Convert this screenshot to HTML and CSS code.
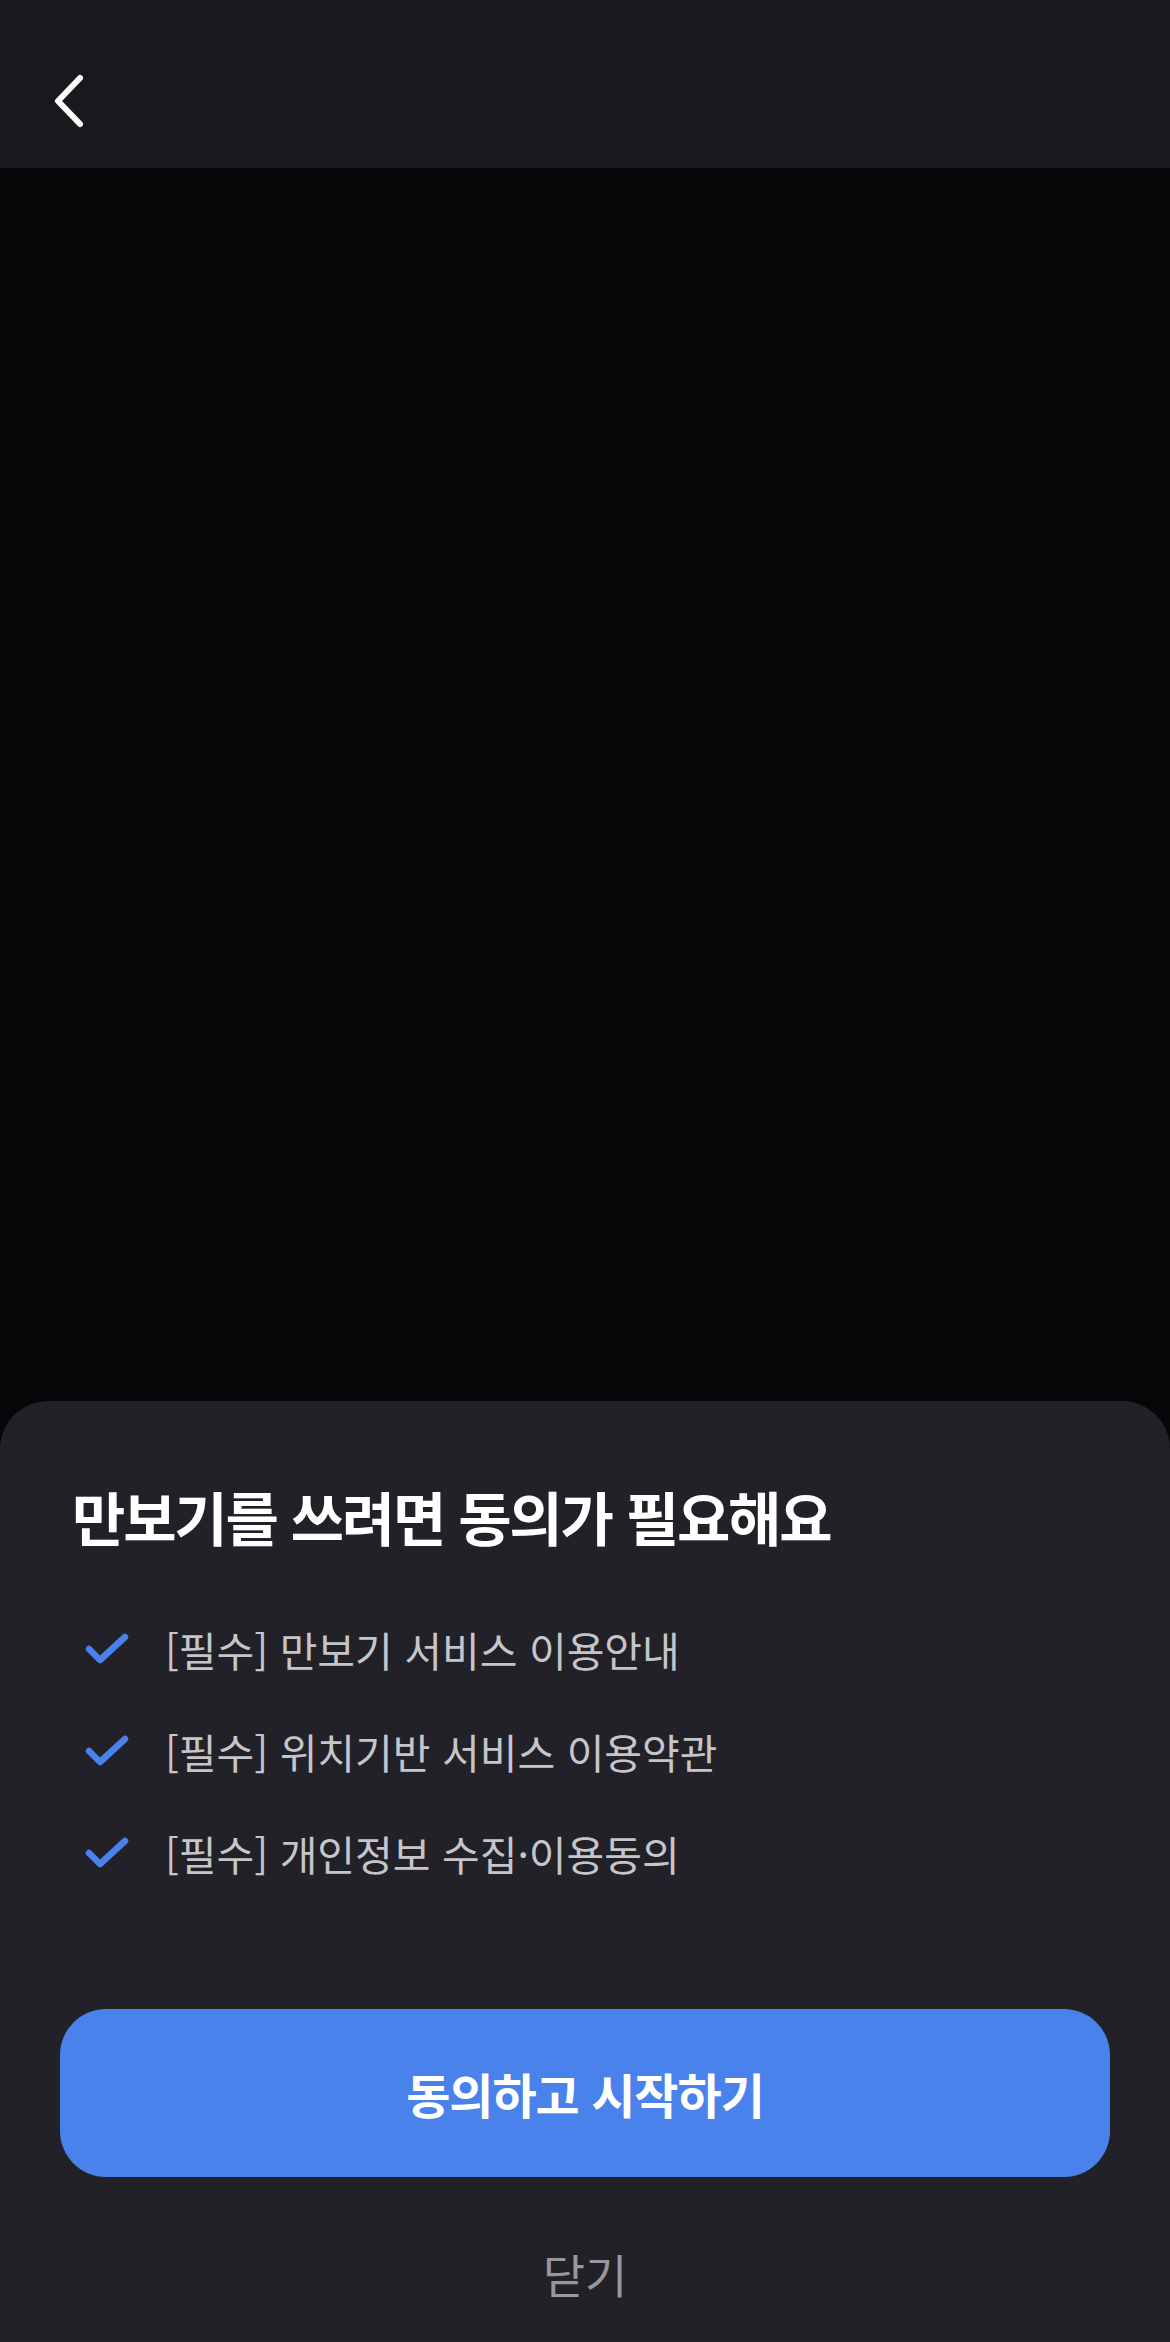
FILE: index.html
```html
<!DOCTYPE html>
<html lang="ko">
<head>
<meta charset="utf-8">
<link rel="stylesheet" href="styles.css">
</head>
<body>
<div class="page">
  <header class="topbar">
    <svg class="back" width="40" height="60" viewBox="0 0 40 60">
      <path d="M30 8 L8 31 L30 54" fill="none" stroke="#ffffff" stroke-width="6" stroke-linecap="round" stroke-linejoin="round"/>
    </svg>
  </header>
  <main class="content"></main>
  <section class="sheet">
    <h1 class="title">만보기를 쓰려면 동의가 필요해요</h1>
    <ul class="terms">
      <li class="term">
        <svg class="check" width="46" height="34" viewBox="0 0 46 34"><path d="M5 17 L16 28 L41 5" fill="none" stroke="#4a82ec" stroke-width="6.5" stroke-linecap="round" stroke-linejoin="round"/></svg>
        <span>[필수] 만보기 서비스 이용안내</span>
      </li>
      <li class="term">
        <svg class="check" width="46" height="34" viewBox="0 0 46 34"><path d="M5 17 L16 28 L41 5" fill="none" stroke="#4a82ec" stroke-width="6.5" stroke-linecap="round" stroke-linejoin="round"/></svg>
        <span>[필수] 위치기반 서비스 이용약관</span>
      </li>
      <li class="term">
        <svg class="check" width="46" height="34" viewBox="0 0 46 34"><path d="M5 17 L16 28 L41 5" fill="none" stroke="#4a82ec" stroke-width="6.5" stroke-linecap="round" stroke-linejoin="round"/></svg>
        <span>[필수] 개인정보 수집·이용동의</span>
      </li>
    </ul>
    <button class="agree">동의하고 시작하기</button>
    <button class="close">닫기</button>
  </section>
</div>
</body>
</html>
```

FILE: styles.css
```css
* { box-sizing: border-box; }
html, body {
  margin: 0;
  padding: 0;
  background: #060608;
}
body {
  font-family: "Noto Sans CJK KR", "Noto Sans", sans-serif;
}
.page {
  width: 1170px;
  height: 2342px;
  display: flex;
  flex-direction: column;
}
.topbar {
  height: 168px;
  background: #19191d;
  display: flex;
  align-items: flex-start;
  padding: 70px 0 0 50px;
  flex-shrink: 0;
}
.back { display: block; }
.content {
  flex: 1;
  background: #060608;
}
.sheet {
  height: 941px;
  flex-shrink: 0;
  background: #212127;
  border-radius: 48px 48px 0 0;
  padding: 76px 60px 0 60px;
  display: flex;
  flex-direction: column;
}
.title {
  margin: 0 0 0 12px;
  font-size: 58px;
  line-height: 78px;
  font-weight: 700;
  color: #ffffff;
  letter-spacing: -2.2px;
}
.terms {
  list-style: none;
  margin: 68px 0 0 0;
  padding: 0;
  display: flex;
  flex-direction: column;
  gap: 50px;
}
.term {
  display: flex;
  align-items: center;
  height: 52px;
  padding-left: 24px;
}
.check { display: block; flex-shrink: 0; }
.term span {
  margin-left: 35px;
  font-size: 41px;
  color: #c5c5ca;
  letter-spacing: 0;
}
.agree {
  margin-top: 130px;
  height: 168px;
  border: none;
  border-radius: 46px;
  background: #4a82ec;
  color: #ffffff;
  font-family: inherit;
  font-size: 48px;
  font-weight: 700;
  letter-spacing: -1px;
  width: 1050px;
}
.close {
  margin-top: 66px;
  align-self: center;
  background: none;
  border: none;
  color: #97979d;
  font-family: inherit;
  font-size: 46px;
  line-height: 60px;
  padding: 0;
}
```
